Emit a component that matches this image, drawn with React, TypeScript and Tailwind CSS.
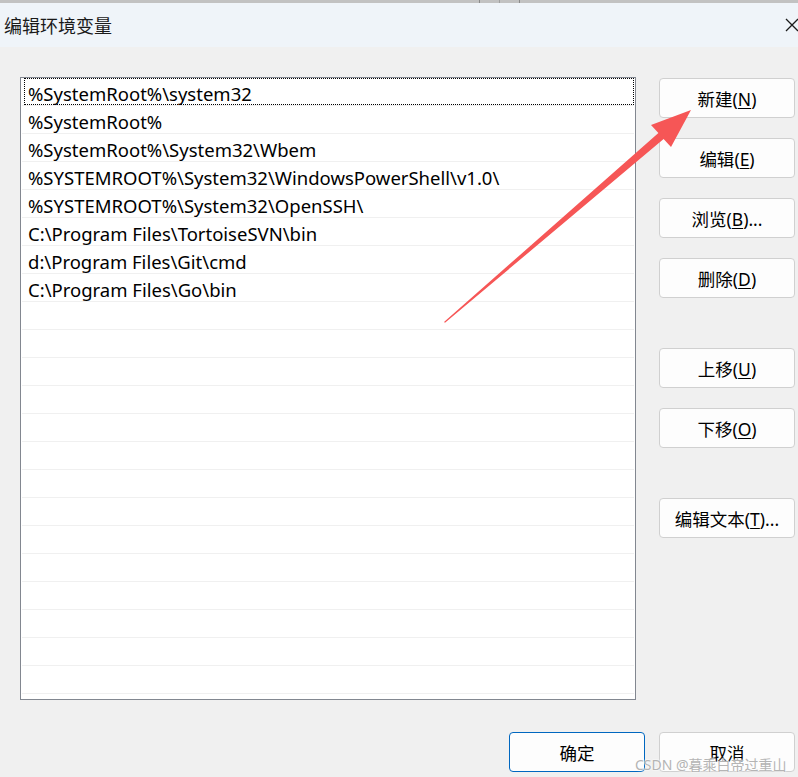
import React from "react";

const paths = [
  "%SystemRoot%\\system32",
  "%SystemRoot%",
  "%SystemRoot%\\System32\\Wbem",
  "%SYSTEMROOT%\\System32\\WindowsPowerShell\\v1.0\\",
  "%SYSTEMROOT%\\System32\\OpenSSH\\",
  "C:\\Program Files\\TortoiseSVN\\bin",
  "d:\\Program Files\\Git\\cmd",
  "C:\\Program Files\\Go\\bin",
];

const rowCount = 22;

type BtnProps = {
  label: string;
  hotkey: string;
  suffix?: string;
  primary?: boolean;
  className?: string;
};

const Btn: React.FC<BtnProps> = ({ label, hotkey, suffix = "", primary, className = "" }) => (
  <button
    className={`h-[40px] w-[136px] rounded-[4px] bg-[#fdfdfd] text-[17.5px] text-black flex items-center justify-center pt-[2px] ${
      primary ? "border border-[#0067c0]" : "border border-[#d0d0d0]"
    } ${className}`}
  >
    {label}
    {hotkey && (
      <>
        (<span className="underline underline-offset-2">{hotkey}</span>)
      </>
    )}
    {suffix}
  </button>
);

export default function App() {
  return (
    <div
      className="relative w-[798px] h-[777px] overflow-hidden bg-[#f0f0f0] flex flex-col"
      style={{ fontFamily: '"Noto Sans", "Noto Sans CJK SC", sans-serif' }}
    >
      {/* window behind */}
      <div className="h-[3px] bg-[#c2c2c2] flex">
        <div className="w-[479px]" />
        <div className="w-px bg-[#8a8a8a]" />
        <div className="w-[19px]" />
        <div className="w-px bg-[#a0a0a0]" />
        <div className="w-[19px]" />
        <div className="w-px bg-[#8a8a8a]" />
      </div>

      {/* Title bar */}
      <div className="h-[44px] bg-[#eff4f9] flex items-center justify-between pl-[4px] pr-[1px]">
        <span className="text-[18px] text-[#1a1a1a]" style={{ fontFamily: '"Noto Sans CJK SC", sans-serif' }}>
          编辑环境变量
        </span>
        <svg width="14" height="14" viewBox="0 0 14 14" className="mr-[-2px]">
          <path d="M1 1 L13 13 M13 1 L1 13" stroke="#1a1a1a" strokeWidth="1.3" />
        </svg>
      </div>

      {/* Body */}
      <div className="flex pl-[20px] pt-[30px]">
        {/* List */}
        <div className="w-[616px] h-[623px] border border-[#828790] bg-white overflow-hidden">
          {Array.from({ length: rowCount }).map((_, i) => (
            <div key={i} className="h-[28px] mx-[1px] border-b border-[#f0f0f0] flex items-center">
              <div
                className={`h-full flex-1 flex items-center pt-[5px] text-[18.5px] text-black ${
                  i === 0 ? "border border-dotted border-black ml-[2px] pl-[3px]" : "ml-[1px] pl-[5px]"
                }`}
              >
                {paths[i] ?? ""}
              </div>
            </div>
          ))}
        </div>

        {/* Side buttons */}
        <div className="ml-[23px] mt-[1px] flex flex-col">
          <Btn label="新建" hotkey="N" />
          <Btn label="编辑" hotkey="E" className="mt-[20px]" />
          <Btn label="浏览" hotkey="B" suffix="..." className="mt-[20px]" />
          <Btn label="删除" hotkey="D" className="mt-[20px]" />
          <Btn label="上移" hotkey="U" className="mt-[50px]" />
          <Btn label="下移" hotkey="O" className="mt-[20px]" />
          <Btn label="编辑文本" hotkey="T" suffix="..." className="mt-[50px]" />
        </div>
      </div>

      {/* Footer */}
      <div className="flex justify-end gap-[14px] pr-[3px] mt-[32px]">
        <Btn label="确定" hotkey="" primary className="w-[135px] h-[39px]" />
        <Btn label="取消" hotkey="" className="h-[39px]" />
      </div>

      {/* Annotation arrow */}
      <svg className="absolute left-0 top-0 pointer-events-none" width="798" height="777">
        <polygon
          points="444,322 658.4,133 651,125 691,110 671,147 663.6,139 445,322.8"
          fill="#f65656"
        />
      </svg>

      {/* Watermark */}
      <div
        className="absolute left-[635px] top-[754px] text-[14px] text-[#b4b4b4] whitespace-nowrap"
        style={{
          fontFamily: '"Noto Sans", "Noto Sans CJK SC", sans-serif',
          textShadow: "0 0 2px #ffffff, 0 0 2px #ffffff",
        }}
      >
        CSDN @暮乘白帝过重山
      </div>
    </div>
  );
}
